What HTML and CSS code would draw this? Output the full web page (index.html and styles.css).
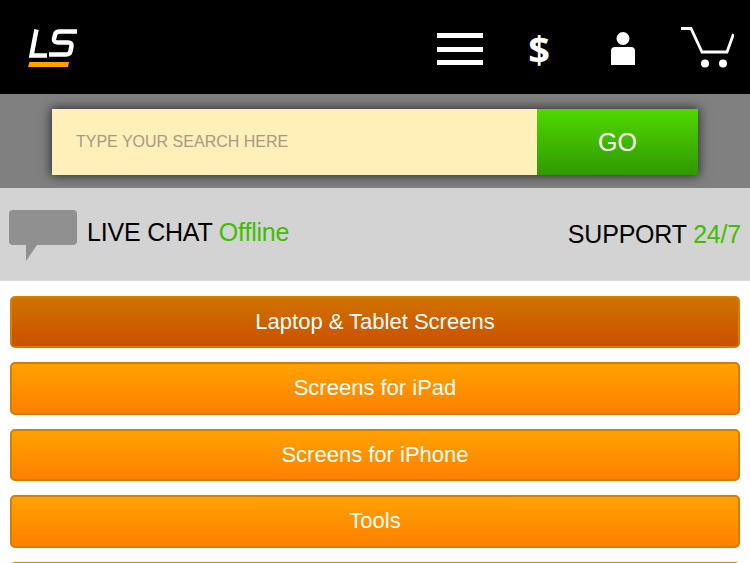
FILE: index.html
```html
<!DOCTYPE html>
<html lang="en">
<head>
<meta charset="utf-8">
<title>LS</title>
<link rel="stylesheet" href="styles.css">
</head>
<body>
<header class="top">
  <svg class="logo" width="50" height="40" viewBox="0 0 50 40" aria-label="LS logo">
    <path d="M8.5 1.5 L3.5 27.5 H19" fill="none" stroke="#fff" stroke-width="4.5"/>
    <path d="M49 3.500 H32 Q27.500 3.500 27 7 L26 11 Q25.500 14.500 30 14.500 H40 Q44 14.500 43.500 18 L42.500 23 Q42 26.500 38 26.500 H21" fill="none" stroke="#fff" stroke-width="4.500"/>
    <polygon points="1.500,34 41,34 40,39 0,39" fill="#ffa200"/>
  </svg>
  <nav class="icons">
    <span class="burger"><i></i><i></i><i></i></span>
    <span class="dollar">$</span>
    <svg class="person" width="24" height="33" viewBox="0 0 24 33"><circle cx="12" cy="6.500" r="6.500" fill="#fff"/><path d="M0 33 V19 Q0 15 4 15 H20 Q24 15 24 19 V33 Z" fill="#fff"/></svg>
    <svg class="cart" width="53" height="41" viewBox="0 0 53 41"><path d="M0 1.500 H10 L21 25 H46 L52.500 7" fill="none" stroke="#fff" stroke-width="2.800"/><circle cx="24" cy="36.500" r="4" fill="#fff"/><circle cx="42" cy="36.500" r="4" fill="#fff"/></svg>
  </nav>
</header>
<section class="search">
  <form class="search-box">
    <input class="search-input" type="text" placeholder="TYPE YOUR SEARCH HERE">
    <button class="go" type="button">GO</button>
  </form>
</section>
<section class="contact">
  <div class="chat">
    <svg class="bubble" width="68" height="51" viewBox="0 0 68 51"><path d="M4 0 H64 Q68 0 68 4 V31 Q68 35 64 35 H28 L17 51 V35 H4 Q0 35 0 31 V4 Q0 0 4 0 Z" fill="#909090"/></svg>
    <span class="label">LIVE CHAT <em>Offline</em></span>
  </div>
  <span class="label support">SUPPORT <em>24/7</em></span>
</section>
<main class="menu">
  <a class="item active">Laptop &amp; Tablet Screens</a>
  <a class="item">Screens for iPad</a>
  <a class="item">Screens for iPhone</a>
  <a class="item">Tools</a>
  <a class="item"></a>
</main>
</body>
</html>
```
FILE: styles.css
```css
* { box-sizing: border-box; }
html, body { margin: 0; padding: 0; height: 563px; overflow: hidden; background: #fff; }
body { font-family: "Liberation Sans", Arial, sans-serif; }

.top {
  height: 94px;
  background: #000;
  display: flex;
  align-items: flex-start;
  justify-content: space-between;
  padding: 28px 16px 0 28px;
}
.logo { display: block; }
.icons { display: flex; align-items: flex-start; margin-top: -1px; }
.burger {
  width: 46px; height: 32px; margin-top: 6px;
  display: flex; flex-direction: column; justify-content: space-between;
}
.burger i { display: block; height: 5px; background: #fff; }
.dollar {
  margin-left: 44px; width: 24px; text-align: center;
  font: bold 38px/44px "Open Sans", sans-serif; color: #fff;
}
.person { margin-left: 60px; margin-top: 5px; }
.cart { margin-left: 46px; }

.search {
  height: 94px;
  background: #808080;
  padding: 15px 52px 13px;
}
.search-box {
  display: flex;
  height: 66px;
  box-shadow: 0 0 10px 1px #2c2c2c;
}
.search-input {
  flex: 1; min-width: 0;
  border: 0; outline: 0;
  background: #ffefb9;
  padding: 0 24px;
  font: 16px "Liberation Sans", Arial, sans-serif;
}
.search-input::placeholder { color: #a89a80; opacity: 1; }
.go {
  width: 161px;
  border: 0;
  color: #fff;
  font: 25px "Liberation Sans", Arial, sans-serif;
  background: linear-gradient(#50d800, #2f9a00);
}

.contact {
  height: 93px;
  background: #d3d3d3;
  border-bottom: 1px solid #dcdcdc;
  display: flex;
  align-items: flex-start;
  justify-content: space-between;
  padding: 22px 9px 0 9px;
}
.chat { display: flex; align-items: flex-start; gap: 10px; }
.bubble { display: block; }
.label { font-size: 25px; line-height: 44px; color: #000; letter-spacing: -0.2px; }
.label em { font-style: normal; color: #3fbe00; }
.support { margin-top: 2px; }

.menu {
  display: flex;
  flex-direction: column;
  gap: 14px;
  padding: 14.500px 10px 0;
}
.item {
  flex: none;
  height: 52.500px;
  display: flex;
  align-items: center;
  justify-content: center;
  border: 2.500px solid #d17f06;
  border-radius: 5px;
  color: #fff;
  font-size: 22px;
  background: linear-gradient(#ffa200, #ff8000);
}
.item.active { background: linear-gradient(#cf7200, #cc5000); }
```
